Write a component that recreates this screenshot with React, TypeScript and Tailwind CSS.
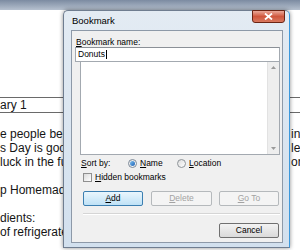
export default function App() {
  const rows = [
    { left: 'e people believe that', right: 'in' },
    { left: 's Day is good luck', right: 'le' },
    { left: 'luck in the future', right: 'or' },
    { left: '', right: '' },
    { left: 'p Homemade Donuts', right: '' },
    { left: '', right: '' },
    { left: 'dients:', right: '' },
    { left: 'of refrigerated biscuits', right: '' },
  ]

  return (
    <div className="relative w-[300px] h-[250px] overflow-hidden bg-white font-['Liberation_Sans',Arial,sans-serif]">
      {/* window behind */}
      <div className="h-[10px] bg-gradient-to-b from-[#7c8ba1] to-[#b6c1cf]" />

      {/* document */}
      <div className="mt-[87px] text-[12px] text-[#151515]">
        <div className="h-[16px] border-y border-[#6a6a6a] leading-[14px] whitespace-nowrap">ary 1</div>
        <div className="mt-[14px]">
          {rows.map((r, i) => (
            <div key={i} className="flex h-[14px] leading-[14px] whitespace-nowrap">
              <span className="flex-1 overflow-hidden">{r.left}</span>
              <span className="w-[9px] shrink-0 overflow-hidden">{r.right}</span>
            </div>
          ))}
        </div>
      </div>

      {/* Bookmark dialog */}
      <div className="absolute left-[63px] top-[10px] w-[227px] h-[238px] flex flex-col rounded-t-[5px] border border-[#6f7d90] border-r-[#3b98dc] bg-gradient-to-b from-[#e3ebf3] to-[#d2e0ee] shadow-[0_0_4px_rgba(0,0,0,0.45)]">
        <div className="h-[19px] flex items-start shrink-0">
          <span className="pl-[8px] pt-[4px] text-[9.5px] leading-[11px] text-black">Bookmark</span>
          <button className="ml-auto mr-[4px] -mt-[1px] w-[33px] h-[13px] rounded-b-[3px] border border-[#6b2414] bg-gradient-to-b from-[#e9a899] via-[#cf563d] to-[#d8785f] flex items-center justify-center">
            <svg width="9" height="7" viewBox="0 0 9 7">
              <path d="M1 0.5 L8 6.5 M8 0.5 L1 6.5" stroke="white" strokeWidth="1.8" />
            </svg>
          </button>
        </div>

        <div className="ml-[7px] mr-[6px] mb-[4px] flex-1 flex flex-col border border-[#8d99a8] bg-[#f0f0f0] text-[8.5px] text-black">
          <div className="mt-[6px] pl-[4px] h-[10px] leading-[10px]">
            <span className="underline">B</span>ookmark name:
          </div>
          <div className="ml-[3px] w-[205px] h-[15px] border border-[#a3a9b0] border-t-[#8b9097] bg-white pl-[2px] leading-[13px] flex items-center">
            Donuts<span className="ml-[1px] w-px h-[9px] bg-black" />
          </div>
          <div className="ml-[8px] w-[200px] h-[93px] border border-t-0 border-[#a3a9b0] bg-white flex justify-end">
            <div className="w-[12px] bg-[#eeeeee] border-l border-[#e2e2e2] flex flex-col justify-between items-center py-[4px]">
              <svg width="5" height="3" viewBox="0 0 5 3"><path d="M0 3 L2.5 0 L5 3 Z" fill="#9a9a9a" /></svg>
              <svg width="5" height="3" viewBox="0 0 5 3"><path d="M0 0 L2.5 3 L5 0 Z" fill="#9a9a9a" /></svg>
            </div>
          </div>

          {/* sort by */}
          <div className="mt-[2px] h-[12px] pl-[9px] flex items-center">
            <span className="w-[47px]"><span className="underline">S</span>ort by:</span>
            <div className="w-[49px] flex items-center gap-[3px]">
              <span className="w-[9px] h-[9px] rounded-full border border-[#7d8a99] bg-gradient-to-br from-[#e6e6e6] to-white flex items-center justify-center">
                <span className="w-[5px] h-[5px] rounded-full bg-gradient-to-br from-[#7cc0f0] to-[#1f62b4]" />
              </span>
              <span><span className="underline">N</span>ame</span>
            </div>
            <div className="flex items-center gap-[3px]">
              <span className="w-[9px] h-[9px] rounded-full border border-[#8e9499] bg-gradient-to-br from-[#dcdcdc] to-white" />
              <span><span className="underline">L</span>ocation</span>
            </div>
          </div>

          {/* hidden bookmarks */}
          <div className="mt-[3px] h-[10px] pl-[11px] flex items-center gap-[3px]">
            <span className="w-[9px] h-[9px] border border-[#8f8f8f] bg-gradient-to-br from-[#dadada] to-white" />
            <span><span className="underline">H</span>idden bookmarks</span>
          </div>

          {/* buttons */}
          <div className="mt-[9px] pl-[11px] flex items-center">
            <button className="w-[60px] h-[15px] rounded-[2px] border border-[#3c7fb1] bg-gradient-to-b from-[#eaf6fd] to-[#bfe2f6] text-[8.5px] leading-[13px] text-black">
              <span className="underline">A</span>dd
            </button>
            <button className="ml-[8px] w-[61px] h-[15px] rounded-[2px] border border-[#b5b9bc] bg-[#f4f4f4] text-[8.5px] leading-[13px] text-[#a3a3a3]">
              <span className="underline">D</span>elete
            </button>
            <button className="ml-[7px] w-[60px] h-[15px] rounded-[2px] border border-[#b5b9bc] bg-[#f4f4f4] text-[8.5px] leading-[13px] text-[#a3a3a3]">
              <span className="underline">G</span>o To
            </button>
          </div>

          <div className="mt-[7px] ml-[11px] w-[197px] border-t border-b border-t-[#d5d5d5] border-b-white" />

          <div className="mt-[8px] ml-[147px]">
            <button className="w-[60px] h-[15px] rounded-[2px] border border-[#707070] bg-gradient-to-b from-[#f3f3f3] to-[#dadada] text-[8.5px] leading-[13px] text-black">
              Cancel
            </button>
          </div>
        </div>
      </div>
    </div>
  )
}
